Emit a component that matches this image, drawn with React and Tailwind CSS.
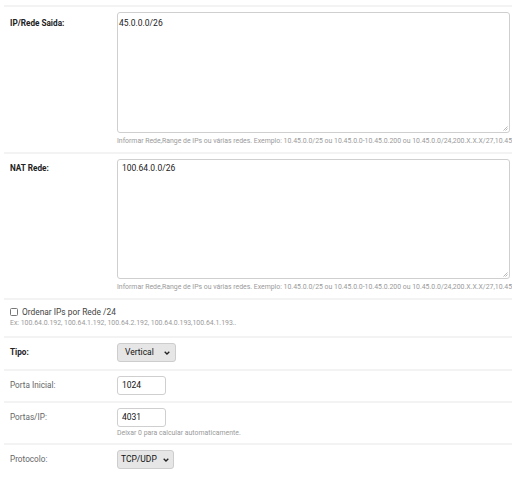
import React from "react";

const Chevron = () => (
  <svg width="6" height="4" viewBox="0 0 6 4" className="block">
    <path d="M0.7 0.7 L3 3 L5.3 0.7" fill="none" stroke="#222" strokeWidth="1.3" />
  </svg>
);

const Help = ({ children, className = "" }) => (
  <div className={"whitespace-nowrap overflow-hidden text-[6.9px] leading-[9px] text-[#9a9a9a] " + className}>
    {children}
  </div>
);

export default function App() {
  const ex =
    "Informar Rede,Range de IPs ou várias redes. Exemplo: 10.45.0.0/25 ou 10.45.0.0-10.45.0.200 ou 10.45.0.0/24,200.X.X.X/27,10.45.0.0/24";
  return (
    <div
      className="w-[512px] h-[477px] overflow-hidden bg-white pl-[4px] pt-[5px]"
      style={{ fontFamily: "Roboto, 'Liberation Sans', sans-serif" }}
    >
      {/* Row 1 */}
      <div className="border-t-2 border-[#f3f3f3] flex pt-[5px] pb-[6px]">
        <div className="w-[113px] shrink-0 pl-[6px] pt-[6px] text-[8.2px] leading-[11px] font-bold text-[#222]">
          IP/Rede Saida:
        </div>
        <div className="flex-1 min-w-0 pr-[2px]">
          <div className="relative h-[121px] border border-[#cfcfcf] rounded-[3px] bg-white pl-[1px] pt-[5px] text-[8.5px] leading-[11px] text-[#222]">
            45.0.0.0/26
            <svg width="5" height="5" viewBox="0 0 5 5" className="absolute right-[1px] bottom-[1px]">
              <path d="M4.5 0.5 L0.5 4.5 M4.5 2.5 L2.5 4.5" stroke="#999" strokeWidth="0.7" />
            </svg>
          </div>
          <Help className="mt-[4px] -mr-[2px]">{ex}</Help>
        </div>
      </div>

      {/* Row 2 */}
      <div className="border-t-2 border-[#f3f3f3] flex pt-[5px] pb-[6px]">
        <div className="w-[113px] shrink-0 pl-[6px] pt-[4px] text-[8.2px] leading-[11px] font-bold text-[#222]">
          NAT Rede:
        </div>
        <div className="flex-1 min-w-0 pr-[2px]">
          <div className="relative h-[120px] border border-[#cfcfcf] rounded-[3px] bg-white pl-[4px] pt-[3px] text-[8.5px] leading-[11px] text-[#222]">
            100.64.0.0/26
            <svg width="5" height="5" viewBox="0 0 5 5" className="absolute right-[1px] bottom-[1px]">
              <path d="M4.5 0.5 L0.5 4.5 M4.5 2.5 L2.5 4.5" stroke="#999" strokeWidth="0.7" />
            </svg>
          </div>
          <Help className="mt-[4px] -mr-[2px]">{ex}</Help>
        </div>
      </div>

      {/* Row 3 */}
      <div className="border-t-2 border-[#f3f3f3] pl-[6px] pt-[6px] pb-[8px]">
        <div className="flex items-center h-[12px] gap-[4px]">
          <div className="w-[8px] h-[8px] border border-[#777] rounded-[1.5px] bg-white" />
          <span className="text-[8.4px] leading-[12px] text-[#444]">Ordenar IPs por Rede /24</span>
        </div>
        <Help className="mt-[1px]">
          Ex: 100.64.0.192, 100.64.1.192, 100.64.2.192, 100.64.0.193,100.64.1.193..
        </Help>
      </div>

      {/* Row 4 Tipo */}
      <div className="border-t-2 border-[#f3f3f3] flex items-center pt-[5px] pb-[7px]">
        <div className="w-[113px] shrink-0 pl-[6px] text-[8.2px] leading-[11px] font-bold text-[#222]">
          Tipo:
        </div>
        <div className="w-[59px] h-[19px] border border-[#cdcdcd] rounded-[3px] bg-[#e6e6e6] flex items-center justify-between pl-[7px] pr-[5px]">
          <span className="text-[8.5px] text-[#111]">Vertical</span>
          <Chevron />
        </div>
      </div>

      {/* Row 5 Porta Inicial */}
      <div className="border-t-2 border-[#f3f3f3] flex items-center pt-[5px] pb-[6px]">
        <div className="w-[113px] shrink-0 pl-[6px] text-[8.2px] leading-[11px] text-[#666]">
          Porta Inicial:
        </div>
        <div className="w-[49px] h-[19px] border border-[#cfcfcf] rounded-[3px] bg-white flex items-center pl-[4px]">
          <span className="text-[8.5px] text-[#111]">1024</span>
        </div>
      </div>

      {/* Row 6 Portas/IP */}
      <div className="border-t-2 border-[#f3f3f3] flex pt-[5px] pb-[5px]">
        <div className="w-[113px] shrink-0 pl-[6px] pt-[4px] text-[8.2px] leading-[11px] text-[#666]">
          Portas/IP:
        </div>
        <div>
          <div className="w-[49px] h-[19px] border border-[#cfcfcf] rounded-[3px] bg-white flex items-center pl-[4px]">
            <span className="text-[8.5px] text-[#111]">4031</span>
          </div>
          <Help className="mt-[2px]">Deixar 0 para calcular automaticamente.</Help>
        </div>
      </div>

      {/* Row 7 Protocolo */}
      <div className="border-t-2 border-[#f3f3f3] flex items-center pt-[5px] pb-[6px]">
        <div className="w-[113px] shrink-0 pl-[6px] text-[8.2px] leading-[11px] text-[#666]">
          Protocolo:
        </div>
        <div className="w-[57px] h-[19px] border border-[#cdcdcd] rounded-[3px] bg-[#e6e6e6] flex items-center justify-between pl-[3px] pr-[4px]">
          <span className="text-[8.5px] text-[#111]">TCP/UDP</span>
          <Chevron />
        </div>
      </div>
    </div>
  );
}
